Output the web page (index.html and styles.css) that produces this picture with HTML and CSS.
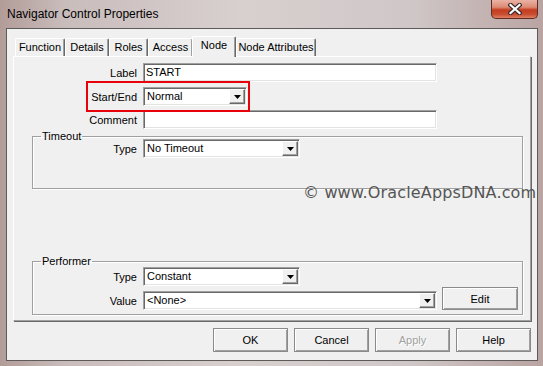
FILE: index.html
```html
<!DOCTYPE html>
<html lang="en">
<head>
    <meta charset="UTF-8">
    <meta name="viewport" content="width=device-width, initial-scale=1.0">
    <title>Navigator Control Properties</title>
    <link rel="stylesheet" href="styles.css">
</head>
<body>
    <div class="window">
        <div class="titlebar">
            <span class="title">Navigator Control Properties</span>
            <span class="close">
                <svg width="14" height="12" viewBox="0 0 14 12">
                    <path d="M2.5 2L11.5 10M11.5 2L2.5 10" stroke="#3b2b2b" stroke-width="4.4" stroke-linecap="square"/>
                    <path d="M2.5 2L11.5 10M11.5 2L2.5 10" stroke="#fff" stroke-width="2.2" stroke-linecap="square"/>
                </svg>
            </span>
        </div>

        <div class="client">
            <ul class="tabs">
                <li class="tab-function">Function</li>
                <li class="tab-details">Details</li>
                <li class="tab-roles">Roles</li>
                <li class="tab-access">Access</li>
                <li class="tab-node active">Node</li>
                <li class="tab-attrs">Node Attributes</li>
            </ul>

            <div class="panel">
                <div class="row">
                    <label class="lbl">Label</label>
                    <div class="field long">START</div>
                </div>
                <div class="row marked">
                    <label class="lbl">Start/End</label>
                    <div class="field combo short">
                        <span class="value">Normal</span>
                        <span class="drop"><svg width="7" height="4" viewBox="0 0 7 4"><path d="M0 0H7L3.5 4Z"/></svg></span>
                    </div>
                    <span class="mark"></span>
                </div>
                <div class="row tight">
                    <label class="lbl">Comment</label>
                    <div class="field long"></div>
                </div>

                <fieldset class="group timeout">
                    <legend>Timeout</legend>
                    <div class="row">
                        <label class="lbl">Type</label>
                        <div class="field combo mid">
                            <span class="value">No Timeout</span>
                            <span class="drop"><svg width="7" height="4" viewBox="0 0 7 4"><path d="M0 0H7L3.5 4Z"/></svg></span>
                        </div>
                    </div>
                </fieldset>

                <fieldset class="group performer">
                    <legend>Performer</legend>
                    <div class="row">
                        <label class="lbl">Type</label>
                        <div class="field combo mid">
                            <span class="value">Constant</span>
                            <span class="drop"><svg width="7" height="4" viewBox="0 0 7 4"><path d="M0 0H7L3.5 4Z"/></svg></span>
                        </div>
                    </div>
                    <div class="row">
                        <label class="lbl">Value</label>
                        <div class="field combo long">
                            <span class="value">&lt;None&gt;</span>
                            <span class="drop"><svg width="7" height="4" viewBox="0 0 7 4"><path d="M0 0H7L3.5 4Z"/></svg></span>
                        </div>
                        <button class="btn edit">Edit</button>
                    </div>
                </fieldset>
            </div>

            <div class="actions">
                <button class="btn">OK</button>
                <button class="btn">Cancel</button>
                <button class="btn" disabled>Apply</button>
                <button class="btn">Help</button>
            </div>
        </div>

        <div class="watermark">&copy; www.OracleAppsDNA.com</div>
    </div>
</body>
</html>
```

FILE: styles.css
```css
body {
    margin: 0;
    font-family: "Liberation Sans", Arial, sans-serif;
    font-size: 11px;
    color: #000;
}

.window {
    position: relative;
    width: 543px;
    height: 366px;
    overflow: hidden;
    background: linear-gradient(90deg, #b29c98 0%, #c9bdbc 12%, #d8d0cf 45%, #d0c8c8 75%, #b9a4a2 100%);
}

/* title bar */
.titlebar {
    height: 28px;
    display: flex;
    align-items: flex-start;
}

.title {
    padding-left: 7px;
    line-height: 28px;
    font-size: 12px;
}

.close {
    margin-left: auto;
    margin-right: 5px;
    width: 47px;
    height: 19px;
    box-sizing: border-box;
    border: 1px solid #5e2c25;
    border-top: none;
    border-radius: 0 0 5px 5px;
    background: linear-gradient(#eab3a5 0%, #dc8a74 40%, #c53c20 55%, #c84e33 80%, #e08163 100%);
    display: flex;
    align-items: center;
    justify-content: center;
}

/* dialog body */
.client {
    margin-left: 6px;
    width: 532px;
    height: 333px;
    box-sizing: border-box;
    border: 1px solid #5f5a5a;
    background: #f0f0f0;
    display: flex;
    flex-direction: column;
}

.tabs {
    list-style: none;
    margin: 0;
    padding: 0 0 0 8px;
    height: 27px;
    display: flex;
    align-items: flex-end;
}

.tabs li {
    flex-shrink: 0;
    height: 18px;
    box-sizing: border-box;
    padding: 0;
    line-height: 17px;
    text-align: center;
    white-space: nowrap;
    border: 1px solid #fff;
    border-bottom: none;
    border-right-color: #696969;
    border-radius: 2px 2px 0 0;
    box-shadow: inset -1px 0 #a0a0a0;
}

.tabs .tab-function { width: 50px; }
.tabs .tab-details { width: 44px; }
.tabs .tab-roles { width: 39px; }
.tabs .tab-access { width: 45px; }
.tabs .tab-node { width: 44px; }
.tabs .tab-attrs { width: 80px; }

.tabs li.active {
    position: relative;
    z-index: 1;
    height: 21px;
    margin: 0 0 -1px -1px;
    background: #f0f0f0;
}

.panel {
    margin: 0 6px;
    height: 265px;
    box-sizing: border-box;
    padding-top: 6px;
    border: 1px solid;
    border-color: #fff #a0a0a0 #a0a0a0 #fff;
    box-shadow: 1px 1px 0 #696969;
    display: flex;
    flex-direction: column;
}

.row {
    display: flex;
    align-items: center;
    height: 19px;
}

.row + .row {
    margin-top: 5px;
}

.row.tight {
    margin-top: 4px;
}

.marked {
    position: relative;
}

.mark {
    position: absolute;
    left: 72px;
    top: -6px;
    width: 164px;
    height: 31px;
    box-sizing: border-box;
    border: 2px solid #e8000b;
}

.lbl {
    width: 123px;
    margin-right: 6px;
    text-align: right;
}

.group .lbl {
    width: 104px;
}

.field {
    height: 19px;
    box-sizing: border-box;
    padding: 0 2px;
    line-height: 17px;
    background: #fff;
    border: 1px solid;
    border-color: #a0a0a0 #fff #fff #a0a0a0;
    box-shadow: inset 1px 1px #696969, inset -1px -1px #e3e3e3;
}

.long { width: 294px; }
.mid { width: 157px; }
.short { width: 104px; }

.combo {
    display: flex;
    padding: 1px;
}

.combo .value {
    flex: 1;
    padding-left: 2px;
    line-height: 15px;
}

.drop {
    width: 16px;
    height: 15px;
    box-sizing: border-box;
    border: 1px solid;
    border-color: #fff #696969 #696969 #fff;
    box-shadow: inset -1px -1px #a0a0a0;
    background: #f0f0f0;
    display: flex;
    align-items: center;
    justify-content: center;
}

/* group boxes */
.group {
    min-width: 0;
    margin: 0 7px 0 18px;
    padding: 0;
    border: 1px solid #a0a0a0;
    box-shadow: inset 1px 1px #fff, 1px 1px #fff;
}

.group legend {
    margin-left: 8px;
    padding: 0 1px;
    line-height: 5px;
}

.timeout {
    margin-top: 5px;
    padding-bottom: 30px;
}

.performer {
    margin-top: auto;
    margin-bottom: 5px;
    padding-top: 3px;
    padding-bottom: 4px;
}

/* buttons */
.btn {
    width: 75px;
    height: 24px;
    padding: 0;
    font: inherit;
    color: #000;
    background: #f0f0f0;
    border: 1px solid #8a8a8a;
    box-shadow: inset 1px 1px #fff, inset -1px -1px #a0a0a0;
}

.btn:disabled {
    color: #a0a0a0;
    text-shadow: 1px 1px #fff;
}

.btn.edit {
    width: 76px;
    height: 23px;
    margin-left: 5px;
    align-self: flex-end;
}

.actions {
    display: flex;
    justify-content: flex-end;
    gap: 6px;
    margin: 7px 6px 0 0;
}

.watermark {
    position: absolute;
    left: 303px;
    top: 185px;
    font-family: "DejaVu Sans", sans-serif;
    font-size: 16px;
    line-height: 16px;
    letter-spacing: 0.15px;
    color: #555;
}
```
